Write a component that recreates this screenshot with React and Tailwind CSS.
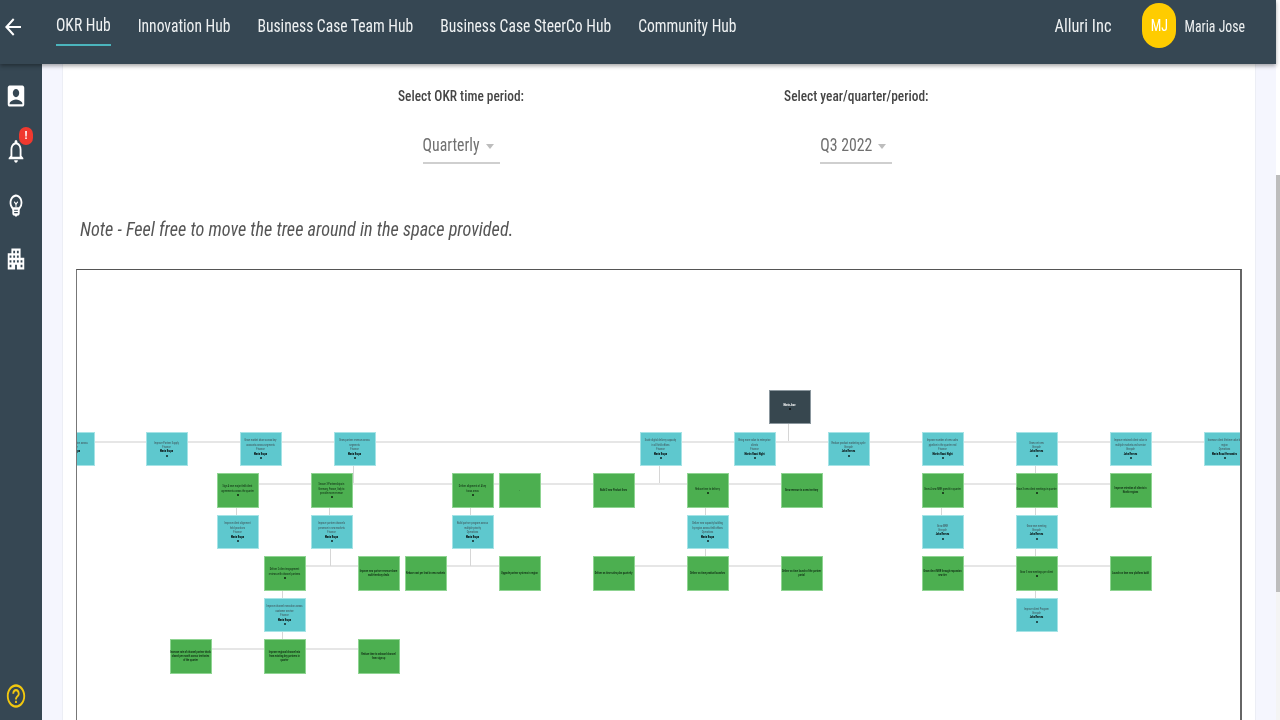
import React from "react";
import { MdArrowBack, MdAccountBox, MdOutlineNotifications, MdOutlineEmojiObjects, MdApartment, MdHelpOutline } from "react-icons/md";

const T = "teal", G = "green", D = "dark";
const R1 = 431.5, R2 = 473, R3 = 514.5, R4 = 556, R5 = 597.5, R6 = 639;

const nodes = [
  [D, 768.5, 389.5, [], "Maria Jose"],
  [T, 52.5, R1, ["Launch product line across", "Finance"], "Maria Krupa"],
  [T, 145.5, R1, ["Improve Partner Supply", "Finance"], "Maria Krupa"],
  [T, 239.5, R1, ["Grow market share across key", "accounts across segments", "Finance"], "Maria Krupa"],
  [T, 333.5, R1, ["Grow partner revenue across", "segments", "Finance"], "Maria Krupa"],
  [T, 639.5, R1, ["Scale digital delivery capacity", "in all field offices", "Finance"], "Maria Krupa"],
  [T, 733.5, R1, ["Bring more value to enterprise", "clients", "Finance"], "Martin Rossi Night"],
  [T, 827.5, R1, ["Reduce product marketing cycle", "lifecycle"], "John Reeves"],
  [T, 921.5, R1, ["Improve number of new sales", "pipeline in the quarter end", "Finance"], "Martin Rossi Night"],
  [T, 1015.5, R1, ["Grow net new", "lifecycle"], "John Reeves"],
  [T, 1109.5, R1, ["Improve retained client value in", "multiple markets and service", "lifecycle"], "John Reeves"],
  [T, 1203.5, R1, ["Increase client lifetime value by", "region", "Operations"], "Maria Rossi Hernandez"],

  [G, 216.5, R2, ["Sign 4 new major field client", "agreements across the quarter"]],
  [G, 310.5, R2, ["Secure 3 Partnerships in", "Germany, France, Italy to", "provide more revenue"]],
  [G, 451.5, R2, ["Deliver alignment of 4 key", "focus areas"]],
  [G, 498.5, R2, [], null, "."],
  [G, 592.5, R2, [], null, "Build 2 new Product lines"],
  [G, 686.5, R2, ["Reduce time to delivery"]],
  [G, 780.5, R2, [], null, "Grow revenue in a new territory"],
  [G, 921.5, R2, ["Grow 4 new MRR growth in quarter"]],
  [G, 1015.5, R2, ["Grow 3 new client meetings in quarter"]],
  [G, 1109.5, R2, [], null, "Improve retention of clients in", "Nordic regions"],

  [T, 216.5, R3, ["Improve client alignment", "field practices", "Finance"], "Maria Krupa"],
  [T, 310.5, R3, ["Improve partner channels", "presence in new markets", "Finance"], "Maria Krupa"],
  [T, 451.5, R3, ["Build partner program across", "multiple priority", "Operations"], "Maria Krupa"],
  [T, 686.5, R3, ["Deliver new capacity building", "by region across field offices", "Operations"], "Maria Krupa"],
  [T, 921.5, R3, ["Grow MRR", "lifecycle"], "John Reeves"],
  [T, 1015.5, R3, ["Grow new meeting", "lifecycle"], "John Reeves"],

  [G, 263.5, R4, ["Deliver 2 client engagement", "reviews with channel partners"]],
  [G, 357.5, R4, [], null, "Improve new partner revenue share", "multi-territory deals"],
  [G, 404.5, R4, [], null, "Reduce cost per lead in new markets"],
  [G, 498.5, R4, [], null, "Upgrade partner systems in region"],
  [G, 592.5, R4, [], null, "Deliver on time sales plan quarterly"],
  [G, 686.5, R4, [], null, "Deliver on time product launches"],
  [G, 780.5, R4, [], null, "Deliver on time launch of the partner", "portal"],
  [G, 921.5, R4, [], null, "Grow client MRR through expansion", "new tier"],
  [G, 1015.5, R4, ["Grow 3 new meetings per client"]],
  [G, 1109.5, R4, [], null, "Launch on time new platform build"],

  [T, 263.5, R5, ["Improve channel execution across", "customer service", "Finance"], "Maria Krupa"],
  [T, 1015.5, R5, ["Improve client Program", "lifecycle"], "John Reeves"],

  [G, 169.5, R6, [], null, "Increase rate of channel partner deals", "closed per month across territories", "of the quarter"],
  [G, 263.5, R6, [], null, "Improve regional channel mix", "from existing key partners in", "quarter"],
  [G, 357.5, R6, [], null, "Reduce time to onboard channel", "from sign up"],
];

const hLines = [
  [78, 441, 1242], [259, 483, 781], [964, 483, 1110],
  [306, 565, 400], [447, 565, 499], [635, 565, 781], [964, 565, 1110],
  [212, 648, 358],
];
const vLines = [
  [788, 424, 441], [659, 466, 483], [353, 466, 483],
  [236, 508, 515], [329, 508, 515], [330, 549, 566],
  [470, 508, 515], [470, 549, 566], [705, 508, 515], [705, 549, 556],
  [1035, 466, 473], [1035, 508, 515], [1035, 549, 556], [1035, 591, 598],
  [941, 508, 515], [282, 591, 598], [282, 632, 639],
];

const OX = 77.5, OY = 270;

function Node({ n }) {
  const [kind, x, y, lines, owner, ...bare] = n;
  const bg =
    kind === T
      ? "bg-[#5ec8ce] border-[#a5e3e6] text-[#3f4f55]"
      : kind === G
      ? "bg-[#4caf50] border-[#8fd492] text-[#0c2410]"
      : "bg-[#37474f] border-[#8b979e] text-white";
  return (
    <div
      className={`absolute w-[42px] h-[34.5px] border flex flex-col items-center justify-center text-center text-[2.7px] leading-[4.4px] [font-stretch:75%] ${bg}`}
      style={{ left: x + 0.5 - OX, top: y - OY }}
    >
      {lines.map((l, i) => (
        <div key={i} className="whitespace-nowrap">{l}</div>
      ))}
      {bare.map((l, i) => (
        <div key={i} className="whitespace-nowrap font-medium text-[#0c2410]">{l}</div>
      ))}
      {owner && <div className={`whitespace-nowrap font-bold ${kind === D ? "text-white" : "text-black"}`}>{owner}</div>}
      {bare.length === 0 && <div className="w-[2px] h-[2px] mt-[1px] bg-black/80 rounded-full" />}
    </div>
  );
}

function Select({ label, value, w }) {
  return (
    <div className="flex flex-col items-center">
      <div className="h-5 leading-5 text-[13.4px] font-medium text-[#454545] [font-stretch:75%] scale-y-[1.15] whitespace-nowrap">{label}</div>
      <div className={`mt-[26px] h-[32px] ${w} flex items-center border-b-2 border-[#cfcfcf] pb-[5px]`}>
        <span className="text-[15.8px] text-[#707070] [font-stretch:75%] scale-y-[1.12] whitespace-nowrap">{value}</span>
        <span className="ml-[6px] mt-[3px] w-0 h-0 border-x-[4px] border-x-transparent border-t-[5px] border-t-[#bdbdbd]" />
      </div>
    </div>
  );
}

const tabClass = "text-[15.6px] text-[#eef1f2] whitespace-nowrap [font-stretch:75%]";

export default function App() {
  return (
    <div className="w-[1280px] h-[720px] overflow-hidden flex bg-white font-['Roboto',sans-serif] blur-[0.35px]">
      <div className="w-[1276px] h-full flex flex-col">
        <header className="h-[64px] pb-[11px] shrink-0 bg-[#364753] flex items-center shadow-[0_2px_4px_rgba(0,0,0,0.35)] relative z-10">
          <MdArrowBack className="ml-[1px] w-[24px] h-[26px] text-white shrink-0" preserveAspectRatio="none" />
          <nav className="ml-[31px] flex gap-[27px] items-center">
            {["OKR Hub", "Innovation Hub", "Business Case Team Hub", "Business Case SteerCo Hub", "Community Hub"].map((t, i) => (
              <div key={t} className={`relative ${i === 0 ? "-top-px" : ""} ${tabClass}`}>
                <span className="inline-block scale-y-[1.14]">{t}</span>
                {i === 0 && <div className="absolute left-0 right-0 top-[30px] h-[2px] bg-[#4bb5bd]" />}
              </div>
            ))}
          </nav>
          <div className="ml-auto flex items-center">
            <span className="text-[16.4px] text-[#eef1f2] [font-stretch:75%] scale-y-[1.14]">Alluri Inc</span>
            <div className="ml-[31px] -mt-[2px] w-[34px] h-[45px] rounded-full bg-[#ffcc00] flex items-center justify-center text-white text-[14px] [font-stretch:75%]">
              <span className="inline-block scale-y-[1.14]">MJ</span>
            </div>
            <span className="ml-[8px] mr-[31px] text-[13.8px] text-[#eef1f2] [font-stretch:75%] scale-y-[1.14]">Maria Jose</span>
          </div>
        </header>
        <div className="flex-1 min-h-0 flex">
          <aside className="w-[42px] shrink-0 bg-[#364753] flex flex-col items-start pl-[5px] text-white">
            <MdAccountBox className="mt-[18px] w-[22px] h-[28px]" preserveAspectRatio="none" />
            <div className="relative mt-[27px] h-[28px]">
              <MdOutlineNotifications className="w-[22px] h-[28px]" preserveAspectRatio="none" />
              <div className="absolute left-[14px] top-[-10px] w-[14px] h-[18px] rounded-full bg-[#f0392f] flex items-center justify-center text-white text-[11px] font-bold">!</div>
            </div>
            <MdOutlineEmojiObjects className="mt-[26px] w-[22px] h-[28px]" preserveAspectRatio="none" />
            <MdApartment className="mt-[26px] w-[22px] h-[28px]" preserveAspectRatio="none" />
            <MdHelpOutline className="mt-auto mb-[10px] w-[22px] h-[28px] text-[#f2c80f]" preserveAspectRatio="none" />
          </aside>
          <main className="flex-1 min-w-0 bg-[#f5f6fe] pl-[20px] pr-[20px]">
            <div className="h-full bg-white border-x border-[#eceef5] flex flex-col">
              <div className="pt-[22px] pl-[335px] flex gap-[260px]">
                <Select label="Select OKR time period:" value="Quarterly" w="w-[77px]" />
                <Select label="Select year/quarter/period:" value="Q3 2022" w="w-[72px]" />
              </div>
              <div className="mt-[51px] ml-[17px] h-[28px] leading-[28px] text-[18.2px] italic text-[#555] [font-stretch:75%] scale-y-[1.14] origin-left whitespace-nowrap">
                Note - Feel free to move the tree around in the space provided.
              </div>
              <div className="mt-[26px] ml-[13px] w-[1166px] flex-1 min-h-0 border-t border-l-[1.5px] border-r-2 border-t-[#555] border-l-[#777] border-r-[#666] relative overflow-hidden">
                {hLines.map(([a, y, b], i) => (
                  <div key={i} className="absolute h-[2px] bg-[#e6e6e6]" style={{ left: a - OX, top: y - OY, width: b - a }} />
                ))}
                {vLines.map(([x, a, b], i) => (
                  <div key={i} className="absolute w-[1.5px] bg-[#d6d6d6]" style={{ left: x - OX, top: a - OY, height: b - a }} />
                ))}
                {nodes.map((n, i) => (
                  <Node key={i} n={n} />
                ))}
              </div>
            </div>
          </main>
        </div>
      </div>
      <div className="w-[4px] h-full bg-[#f4f4f4] flex flex-col">
        <div className="h-[175px] bg-white" />
        <div className="h-[417px] bg-[#bdbdbd]" />
      </div>
    </div>
  );
}
